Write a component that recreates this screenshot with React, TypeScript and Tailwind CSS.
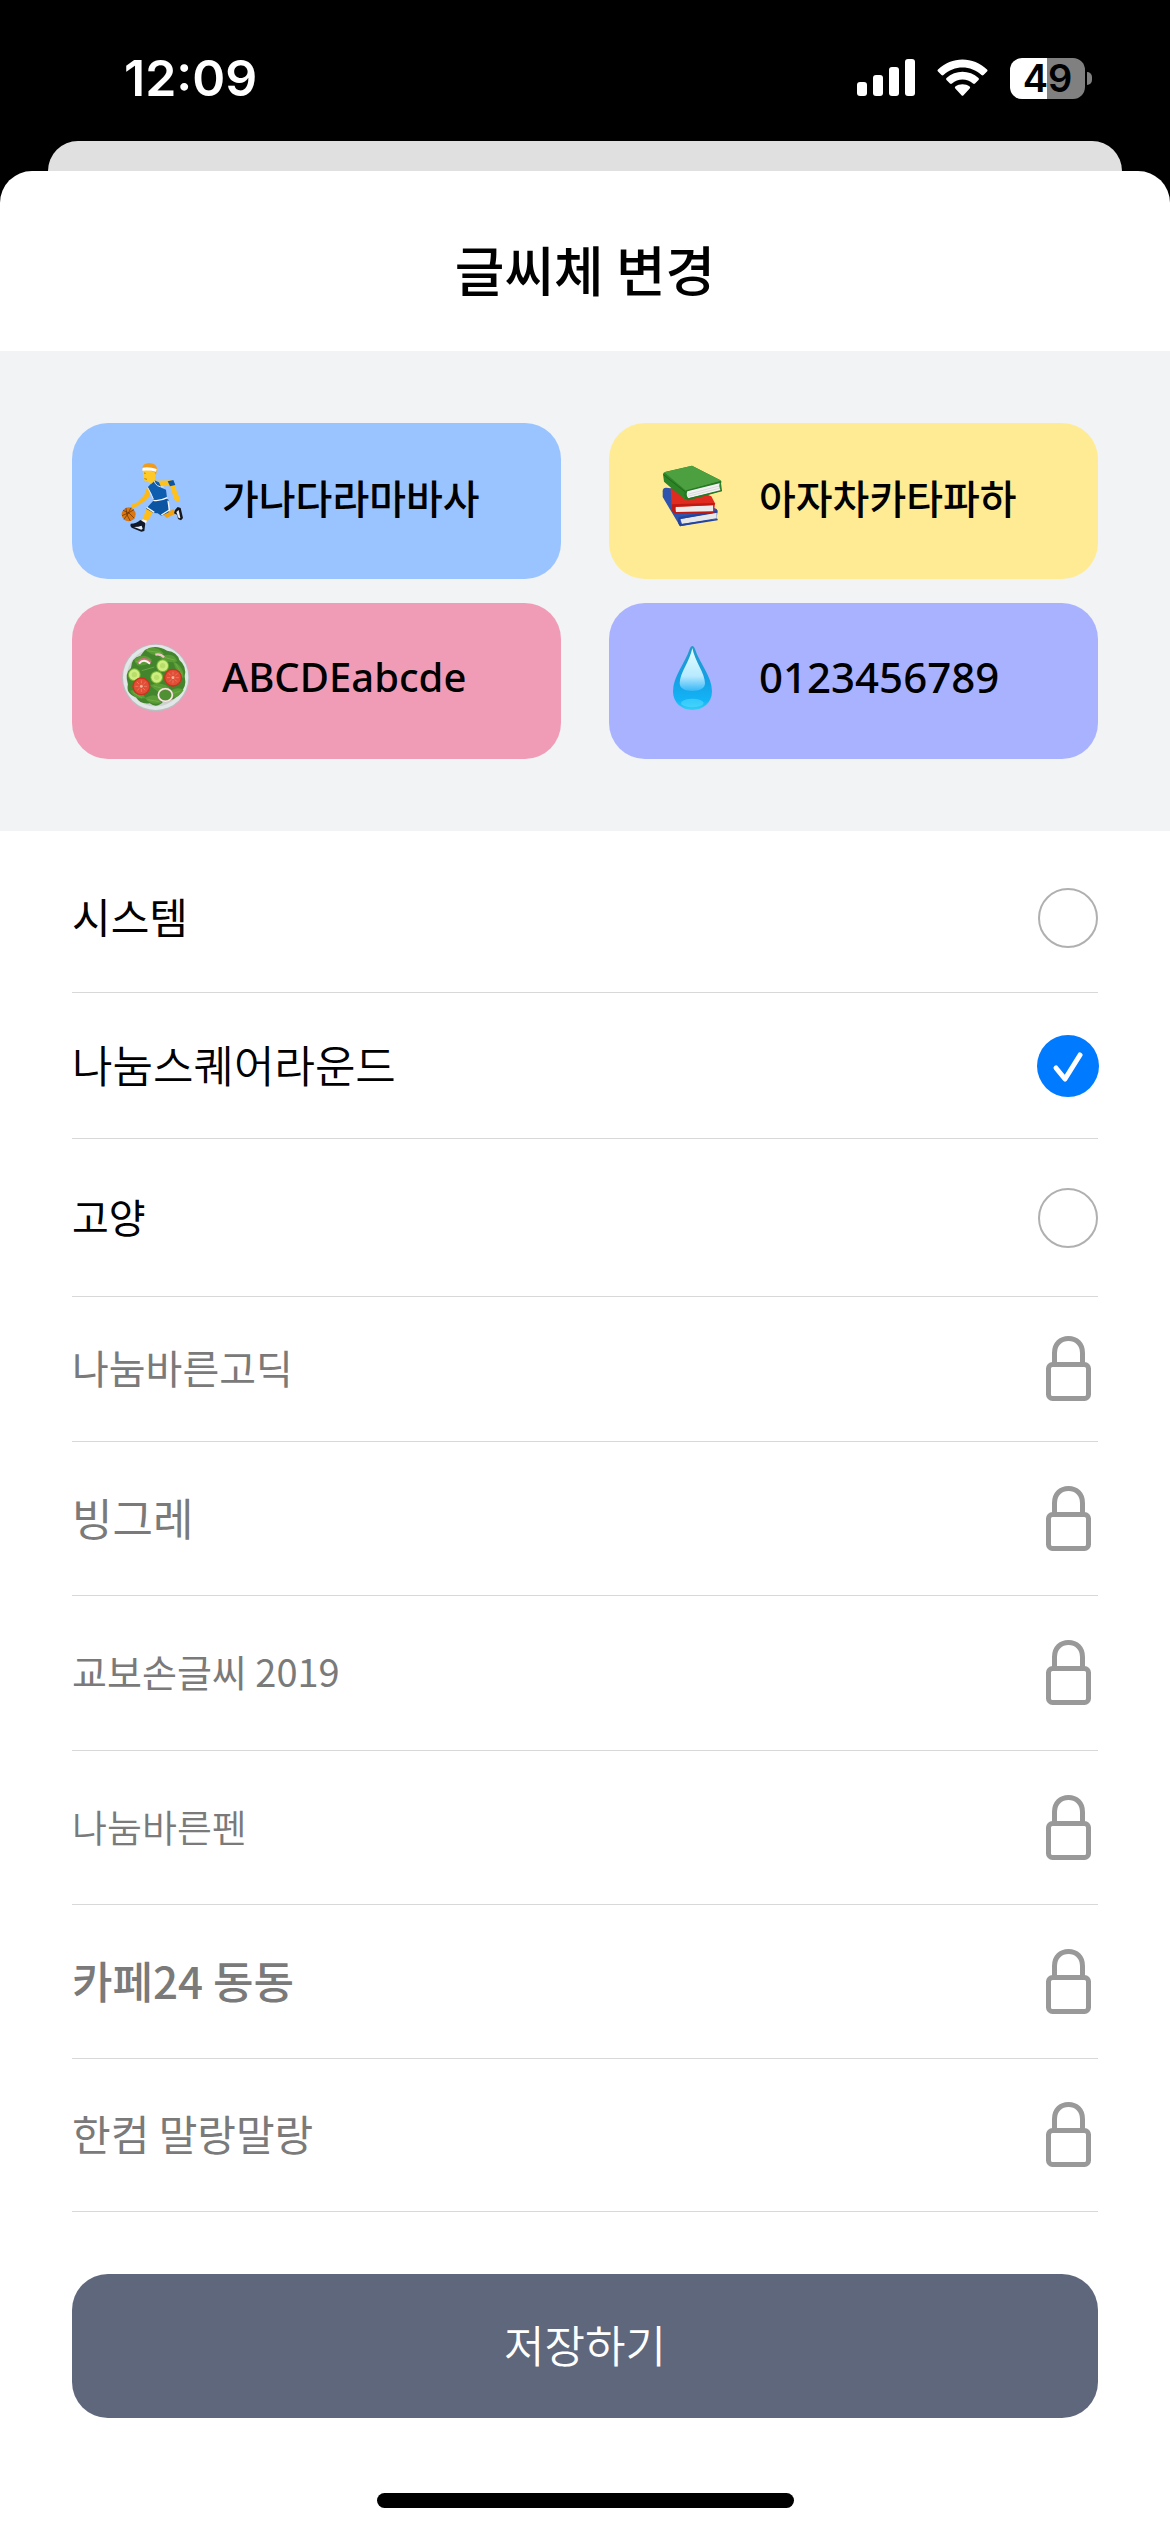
import React, { useState } from 'react';
import clsx from 'clsx';

const KR_FONT = "font-['Noto_Sans_CJK_KR',sans-serif]";

const fonts = [
  { id: 'system', name: '시스템', text: 'text-[42px]', row: 'min-h-[150px]', locked: false },
  { id: 'square-round', name: '나눔스퀘어라운드', text: 'text-[44px] font-[350]', row: 'min-h-[146px]', locked: false },
  { id: 'goyang', name: '고양', text: 'text-[40px]', row: 'min-h-[158px]', locked: false },
  { id: 'barun-gothic', name: '나눔바른고딕', text: 'text-[40px]', row: 'min-h-[145px]', locked: true },
  { id: 'binggrae', name: '빙그레', text: 'text-[44px]', row: 'min-h-[154px]', locked: true },
  { id: 'kyobo', name: '교보손글씨 2019', text: 'text-[38px]', row: 'min-h-[155px]', locked: true },
  { id: 'barun-pen', name: '나눔바른펜', text: 'text-[38px] font-[350]', row: 'min-h-[154px]', locked: true },
  { id: 'cafe24', name: '카페24 동동', text: 'text-[44px] font-medium', row: 'min-h-[154px]', locked: true },
  { id: 'malang', name: '한컴 말랑말랑', text: 'text-[42px]', row: 'min-h-[153px]', locked: true },
];

const StatusBar = () => (
  <div className="flex items-center justify-between pl-[124px] pr-[78px] pt-[48px] pb-[33px] text-white">
    <span className="font-['Inter',sans-serif] text-[50px] leading-[60px] font-semibold">12:09</span>
    <div className="flex items-center gap-[22px]">
      <svg width="58" height="38" viewBox="0 0 58 38" fill="white">
        <rect x="0" y="23" width="10" height="14" rx="3" />
        <rect x="16" y="16" width="10" height="21" rx="3" />
        <rect x="32" y="8" width="10" height="29" rx="3" />
        <rect x="48" y="0" width="10" height="37" rx="3" />
      </svg>
      <svg width="51" height="38" viewBox="0 0 51 38" fill="white">
        <path d="M1 10.5C14.500-3 36.500-3 50 10.500Q51 11.500 50 12.500L46.500 16Q45.500 16.800 44.500 16C34 6 17 6 6.500 16Q5.500 16.800 4.500 16L1 12.500Q0 11.500 1 10.500Z" />
        <path d="M9.500 19C18.500 10.500 32.500 10.500 41.500 19Q42.500 20 41.500 21L38 24.500Q37 25.300 36 24.500C30 19.300 21 19.300 15 24.500Q14 25.300 13 24.500L9.500 21Q8.500 20 9.500 19Z" />
        <path d="M18.300 27.500C22.500 24.500 28.500 24.500 32.700 27.500Q33.700 28.500 32.700 29.500L26.500 36.200Q25.500 37.200 24.500 36.200L18.300 29.500Q17.300 28.500 18.300 27.500Z" />
      </svg>
      <div className="flex items-center gap-[2px]">
        <div className="flex h-[41px] w-[75px] items-center justify-center rounded-[12px] bg-[linear-gradient(90deg,#fff_50%,#808080_50%)] font-['Inter',sans-serif] text-[38px] font-semibold text-black">
          49
        </div>
        <div className="h-[13px] w-[5px] rounded-r-full bg-[#808080]" />
      </div>
    </div>
  </div>
);

const BasketballIcon = () => (
  <svg className="size-[90px] shrink-0" viewBox="0 18 270 270">
    {/* back arm and legs */}
    <path d="M136 92L184 91Q192 94 194 105L204 134Q212 145 210 152L202 155L192 146L180 107L138 110Z" fill="#ffc21c" />
    <path d="M173 94L190 90L196 105L180 109Z" fill="#0e55a0" />
    <path d="M158 193L190 178L200 190L170 204Z" fill="#f2a30f" />
    <path d="M195 180L203 171L212 174L219 204L213 211L204 207L202 195L192 190Z" fill="#16181d" />
    <path d="M199 186L206 180L211 204L206 205Z" fill="#e9eef5" />
    {/* front arm */}
    <path d="M112 110L121 118L119 138Q104 155 78 171L66 176Q60 170 68 162L82 157L102 136Z" fill="#ffb915" />
    {/* front leg */}
    <path d="M110 172L131 184L111 216L95 213L103 193Z" fill="#ffbd1a" />
    <path d="M98 208L111 212L107 222L94 217Z" fill="#f4f6fa" />
    <path d="M62 221Q80 221 91 210L106 219L103 243L94 245L65 233Q59 227 62 221Z" fill="#111827" />
    <path d="M72 231Q86 231 95 227L98 236L94 239Z" fill="#e6eff8" />
    {/* kit */}
    <path d="M132 150L168 144L177 151L176 187L154 197L143 190L131 189L108 176Z" fill="#0b55a3" />
    <path d="M110 172L133 187M174 152L178 180L154 195" stroke="#f4f8ff" strokeWidth="4" fill="none" />
    <path d="M113 112L133 91L147 97L154 113L168 119L171 144Q148 153 131 150L125 132Z" fill="#0f5dae" />
    <path d="M113 112L130 147M132 92Q138 112 161 111" stroke="#d9ebfa" strokeWidth="3" fill="none" />
    <path d="M130 151Q150 154 172 143" stroke="#fff" strokeWidth="4" fill="none" />
    {/* head */}
    <path d="M98 57L136 57Q142 68 136 78L134 92L123 102L112 94Q101 95 100 83Z" fill="#ffca28" />
    <path d="M97 53Q99 40 118 39Q138 40 141 55L138 75L133 66L101 56Z" fill="#f29b18" />
    <path d="M98 53Q119 50 140 57L138 65Q118 60 97 62Z" fill="#fffdf8" />
    <path d="M102 69L107 70M103 86L111 88" stroke="#8a5b0a" strokeWidth="2" />
    {/* ball */}
    <circle cx="56" cy="193" r="21" fill="#d97812" />
    <path d="M39 181Q57 184 73 205M36 197Q55 190 72 179M48 174Q47 195 61 213M63 173Q55 193 42 208" stroke="#5f2c08" strokeWidth="2" fill="none" />
  </svg>
);

const Tomato = ({ x, y }: { x: number; y: number }) => (
  <g transform={`translate(${x} ${y})`}>
    <circle r="27" fill="#c93320" />
    <circle r="23" fill="#e04e36" />
    <path d="M0-18V18M-18 0H18M-13-13L13 13M13-13L-13 13" stroke="#f08d74" strokeWidth="2" strokeDasharray="9 4" />
    <circle r="4" fill="#f6b49c" />
  </g>
);

const Cucumber = ({ x, y }: { x: number; y: number }) => (
  <g transform={`translate(${x} ${y})`}>
    <circle r="19" fill="#79b832" />
    <circle r="16" fill="#d0ed84" />
    <circle r="8" fill="#b8df68" />
  </g>
);

const SaladIcon = () => (
  <svg className="size-[90px] shrink-0" viewBox="0 18 270 270">
    <circle cx="137" cy="143" r="101" fill="#b9bfc0" />
    <circle cx="137" cy="142" r="98" fill="#e2e6e6" />
    <circle cx="137" cy="142" r="87" fill="#cbd2d0" />
    <path d="M104 61Q135 41 171 62Q202 66 208 90Q231 109 224 139Q232 174 208 190Q196 214 163 211Q143 238 119 220Q91 224 78 202Q46 190 54 163Q43 129 63 114Q65 82 91 78Z" fill="#43852c" />
    <path d="M106 59Q140 43 162 72Q132 84 106 59ZM72 89Q100 65 126 89Q110 110 82 106ZM147 81Q193 63 202 94Q175 103 147 81ZM188 92Q225 111 220 145Q201 132 188 92ZM120 165Q163 151 183 180Q150 200 120 165ZM105 204Q144 181 154 220Q119 226 105 204ZM166 194Q198 164 221 180Q199 217 166 194ZM60 182Q89 173 106 204Q75 211 60 182Z" fill="#5a9c36" />
    <path d="M76 96L118 87M110 62L152 68M157 81L194 90M197 101L216 134M131 168L172 179M113 209L148 215M176 195L211 183M70 188L96 204M95 122L133 111" stroke="#7fb54c" strokeWidth="2" fill="none" />
    <path d="M85 99Q99 78 122 98" stroke="#d46f82" strokeWidth="9" fill="none" />
    <path d="M87 101Q101 84 120 101" stroke="#fff1ee" strokeWidth="6" fill="none" />
    <path d="M136 74Q152 70 162 82" stroke="#f3c6c6" strokeWidth="7" fill="none" />
    <Cucumber x={73} y={134} />
    <Cucumber x={158} y={107} />
    <Cucumber x={140} y={142} />
    <Tomato x={94} y={169} />
    <Tomato x={189} y={143} />
    <ellipse cx="166" cy="195" rx="21" ry="19" fill="#4f9132" stroke="#c4a1a0" strokeWidth="6" />
    <ellipse cx="166" cy="195" rx="21" ry="19" fill="none" stroke="#f7f0e6" strokeWidth="4" />
  </svg>
);

const BooksIcon = () => (
  <svg className="size-[90px] shrink-0" viewBox="-9 18 270 270">
    {/* blue */}
    <path d="M38 124Q38 112 49 113L74 116L201 178L202 187L200 207L90 229L38 141Z" fill="#3054ae" />
    <path d="M91 207L200 187V205L96 222Z" fill="#e7e7e9" />
    <path d="M86 201L203 181L202 188L92 207Q87 214 94 222L203 206V211L90 229Q80 219 86 201Z" fill="#2444a0" />
    {/* red */}
    <path d="M62 115L103 106L184 139L195 160L192 186L71 191L65 171Z" fill="#df2b20" />
    <path d="M77 171L189 166V185L78 188Z" fill="#ececec" />
    <path d="M66 163L193 159L194 165L77 170Q72 178 77 186L193 184V189L71 191Q63 181 66 163Z" fill="#bf1914" />
    {/* green */}
    <path d="M39 73Q39 67 47 65L126 47L212 91L216 122L114 151Q104 151 98 143L42 95Z" fill="#2c8427" />
    <path d="M43 67L126 47L213 92L108 122Z" fill="#4da040" />
    <path d="M109 123L210 97Q204 110 213 122L114 145Q106 140 109 123Z" fill="#f2f2f2" />
    <path d="M113 133L207 108M113 139L208 115" stroke="#cccfcf" strokeWidth="2" />
    <path d="M40 74L106 126Q103 138 109 147" stroke="#23661f" strokeWidth="3" fill="none" />
    <path d="M108 121L214 93V98L112 124Q107 136 115 145L216 119V124L114 151Q99 146 108 121Z" fill="#267824" />
  </svg>
);

const DropIcon = () => (
  <svg className="size-[90px] shrink-0" viewBox="0 0 270 270">
    <defs>
      <linearGradient id="drop-body" x1="0" y1="0" x2="0" y2="1">
        <stop offset="0" stopColor="#249ac9" />
        <stop offset="0.500" stopColor="#159fe4" />
        <stop offset="0.850" stopColor="#12b4f6" />
        <stop offset="1" stopColor="#36cdf4" />
      </linearGradient>
      <linearGradient id="drop-shine" x1="0" y1="0" x2="0" y2="1">
        <stop offset="0" stopColor="#e4ffff" />
        <stop offset="0.650" stopColor="#b8eaff" />
        <stop offset="1" stopColor="#37b7f6" />
      </linearGradient>
    </defs>
    <path d="M136 30Q141 30 144 39C157 80 195 121 195 166C195 201 168 222 136 222C104 222 78 201 78 166C78 121 115 80 128 39Q131 30 136 30Z" fill="url(#drop-body)" />
    <path d="M136 36C143 75 174 111 174 142C174 158 157 165 136 165C115 165 98 158 98 142C98 111 129 75 136 36Z" fill="url(#drop-shine)" />
    <ellipse cx="136" cy="201" rx="34" ry="13" fill="#56dcff" opacity="0.550" />
  </svg>
);

const LockIcon = () => (
  <svg width="60" height="66" viewBox="0 0 60 66" fill="none" stroke="#999999" strokeWidth="5">
    <path d="M16.500 28V17C16.500 8 22.500 2.500 30.500 2.500S44.500 8 44.500 17V28" />
    <rect x="10.500" y="28.500" width="40" height="34" rx="4" />
  </svg>
);

const samples = [
  { text: '가나다라마바사', bg: 'bg-[#9ac4ff]', icon: <BasketballIcon />, label: 'text-[40px] pb-2' },
  { text: '아자차카타파하', bg: 'bg-[#ffeb94]', icon: <BooksIcon />, label: 'text-[40px] pb-2' },
  { text: 'ABCDEabcde', bg: 'bg-[#f19cb7]', icon: <SaladIcon />, label: "text-[40px] pb-2 font-['Noto_Sans',sans-serif]" },
  { text: '0123456789', bg: 'bg-[#a9b2ff]', icon: <DropIcon />, label: "text-[42px] pb-2 font-['Noto_Sans',sans-serif]" },
];

const App = () => {
  const [selected, setSelected] = useState('square-round');

  return (
    <div className={clsx('flex min-h-screen flex-col bg-black', KR_FONT)}>
      <StatusBar />
      <div className="mx-12 h-[30px] rounded-t-[30px] bg-[#e0e0e0]" />

      <main className="flex grow flex-col rounded-t-[32px] bg-white">
        <header className="flex h-[180px] items-center justify-center pt-4">
          <h1 className="text-[54px] leading-[72px] font-medium text-black">글씨체 변경</h1>
        </header>

        <section className="grid grid-cols-2 gap-x-12 gap-y-6 bg-[#f1f3f5] p-[72px]">
          {samples.map((s) => (
            <div key={s.text} className={clsx('flex h-[156px] items-center gap-[22px] rounded-[36px] px-[38px]', s.bg)}>
              {s.icon}
              <span className={clsx('leading-[60px] font-medium whitespace-nowrap text-black', s.label)}>
                {s.text}
              </span>
            </div>
          ))}
        </section>

        <form className="flex grow flex-col px-[72px] pt-3" onSubmit={(e) => e.preventDefault()}>
          {fonts.map((f) => (
            <label
              key={f.id}
              className={clsx(
                'flex items-center justify-between border-b border-[#d8d8d8]',
                f.row,
                f.locked ? 'text-[#7a7a7a]' : 'text-black'
              )}
            >
              <span className={clsx('pb-1 leading-[60px]', f.text)}>{f.name}</span>
              <span className="relative flex w-[60px] items-center justify-center">
                <input
                  type="radio"
                  name="font"
                  value={f.id}
                  disabled={f.locked}
                  checked={selected === f.id}
                  onChange={() => setSelected(f.id)}
                  className={
                    f.locked
                      ? 'sr-only'
                      : 'size-[60px] shrink-0 appearance-none rounded-full border-2 border-[#b0b0b0] checked:size-[62px] checked:border-0 checked:bg-[#007aff]'
                  }
                />
                {f.locked && <LockIcon />}
                {selected === f.id && (
                  <svg className="pointer-events-none absolute size-[62px]" viewBox="0 0 62 62" fill="none">
                    <path d="M19 33L28 44L43 20" stroke="white" strokeWidth="5" strokeLinecap="round" strokeLinejoin="round" />
                  </svg>
                )}
              </span>
            </label>
          ))}

          <button type="submit" className="mt-[62px] h-[144px] rounded-[36px] bg-[#5f677c] pb-1 text-[44px] font-[350] text-white">
            저장하기
          </button>
        </form>

        <div className="mx-auto mt-[75px] mb-6 h-[15px] w-[417px] rounded-full bg-black" />
      </main>
    </div>
  );
};

export default App;
